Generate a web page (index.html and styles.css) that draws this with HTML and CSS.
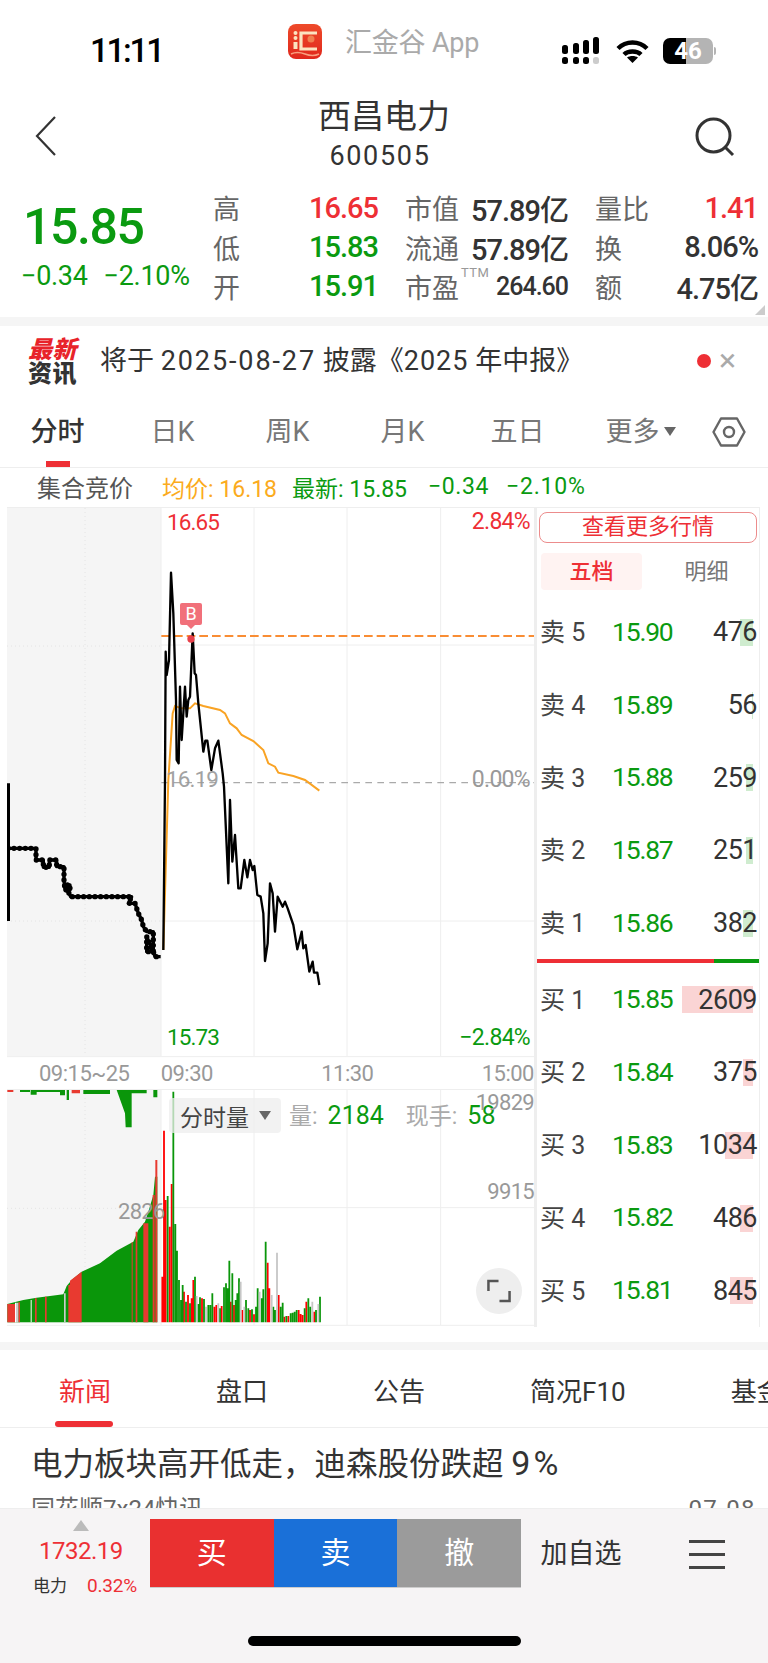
FILE: index.html
```
<!DOCTYPE html>
<html>
<head>
  <meta charset="UTF-8">
  <link rel="stylesheet" href="styles.css">
  <title>西昌电力</title>
</head>
<body>
<div class="page">

  <div class="status">
    <div class="status-time">11:11</div>
    <div class="status-app">
      <svg class="app-logo" viewBox="0 0 34 35">
        <defs><linearGradient id="logoRed" x1="0" y1="0" x2="0" y2="1"><stop offset="0" stop-color="#ee4a2a"/><stop offset="1" stop-color="#e0281c"/></linearGradient></defs>
        <rect width="34" height="35" rx="8" fill="url(#logoRed)"/>
        <circle cx="7.5" cy="9" r="2" fill="#fbe3c0"/>
        <circle cx="7.5" cy="14" r="2" fill="#fbe3c0"/>
        <path d="M7.5 18V25" stroke="#fbe3c0" stroke-width="4" fill="none"/>
        <path d="M29 9H13V25H29" stroke="#fbe3c0" stroke-width="3.2" fill="none"/>
        <circle cx="23" cy="15" r="3.5" fill="#f08050"/>
        <path d="M3 30Q9 27 17 30T31 30" stroke="#f8a080" stroke-width="1.4" fill="none"/>
      </svg>
      <span>汇金谷 App</span>
    </div>
    <div class="status-icons">
      <svg class="signal" viewBox="0 0 39 27">
        <rect x="0" y="8" width="6" height="9" rx="2.5"/>
        <rect x="11" y="6" width="6" height="11" rx="2.5"/>
        <rect x="21" y="3" width="6" height="14" rx="2.5"/>
        <rect x="31" y="0" width="6" height="17" rx="2.5"/>
        <rect x="0" y="20" width="6" height="7" rx="2.5"/>
        <rect x="11" y="20" width="6" height="7" rx="2.5"/>
        <rect x="21" y="20" width="6" height="7" rx="2.5"/>
        <rect x="31" y="20" width="6" height="7" rx="2.5" fill="#ccc"/>
      </svg>
      <svg class="wifi" viewBox="0 0 33 24">
        <path d="M2 9.5C10 1.5 23 1.5 31 9.5" stroke="#000" stroke-width="4.4" fill="none"/>
        <path d="M8 15.5C12 11.5 21 11.5 25 15.5" stroke="#000" stroke-width="4.4" fill="none"/>
        <path d="M16.5 24L11 18.5C14 16.5 19 16.5 22 18.5Z"/>
      </svg>
      <div class="battery">46</div>
      <div class="battery-cap"></div>
    </div>
  </div>

  <div class="header">
    <svg class="back" viewBox="0 0 22 40"><path d="M20 1L2 20L20 39" fill="none" stroke="#333" stroke-width="2.2"/></svg>
    <div class="title-box">
      <div class="title">西昌电力</div>
      <div class="code">600505</div>
    </div>
    <svg class="search" viewBox="0 0 40 40"><circle cx="18.5" cy="18.5" r="16.5" fill="none" stroke="#333" stroke-width="3"/><path d="M30 30L38 38" stroke="#333" stroke-width="3"/></svg>
  </div>

  <div class="quote">
    <div class="quote-main">
      <div class="price">15.85</div>
      <div class="change"><span>−0.34</span><span>−2.10%</span></div>
    </div>
    <div class="stats">
      <div class="stat"><span class="lbl">高</span><span class="val red">16.65</span></div>
      <div class="stat"><span class="lbl">市值</span><span class="val">57.89亿</span></div>
      <div class="stat"><span class="lbl">量比</span><span class="val red">1.41</span></div>
      <div class="stat"><span class="lbl">低</span><span class="val green">15.83</span></div>
      <div class="stat"><span class="lbl">流通</span><span class="val">57.89亿</span></div>
      <div class="stat"><span class="lbl">换</span><span class="val">8.06%</span></div>
      <div class="stat"><span class="lbl">开</span><span class="val green">15.91</span></div>
      <div class="stat"><span class="lbl">市盈<sup class="ttm">TTM</sup></span><span class="val small">264.60</span></div>
      <div class="stat"><span class="lbl">额</span><span class="val">4.75亿</span></div>
    </div>
    <div class="corner"></div>
  </div>

  <div class="band"></div>

  <div class="notice">
    <div class="notice-logo"><div class="notice-red">最新</div><div class="notice-dark">资讯</div></div>
    <div class="notice-text">将于 <span class="date-num">2025-08-27</span> 披露《<span class="year-num">2025</span> 年中报》</div>
    <div class="notice-dot"></div>
    <div class="notice-close">×</div>
  </div>

  <div class="tabs">
    <div class="tab active">分时</div>
    <div class="tab">日K</div>
    <div class="tab">周K</div>
    <div class="tab">月K</div>
    <div class="tab">五日</div>
    <div class="tab more">更多<i class="arrow"></i></div>
    <svg class="hex" viewBox="0 0 34 30"><path d="M9 1.5H25L32.5 15L25 28.5H9L1.5 15Z" fill="none" stroke="#666" stroke-width="2.4" stroke-linejoin="round"/><circle cx="17" cy="15" r="5" fill="none" stroke="#666" stroke-width="2.4"/></svg>
  </div>

  <div class="info">
    <span class="info-name">集合竞价</span>
    <span class="orange info-avg">均价: 16.18</span>
    <span class="green info-new">最新: 15.85</span>
    <span class="green info-chg">−0.34</span>
    <span class="green info-pct">−2.10%</span>
  </div>

  <div class="chart-row">
    <div class="chart-col">

      <div class="chart-main">
        <svg class="chart-svg" viewBox="21 21 1581 1653">
          <rect x="21" y="24" width="462" height="1644" fill="#f5f5f5"/>
          <g stroke="#eee" stroke-width="3" fill="none">
            <path d="M21 22.5H1602M483 24V1668M762 24V1668M1041 24V1668M1322 24V1668M483 435H1602M483 1263H1602M21 1670H1602"/>
          </g>
          <path d="M255 24V1668M21 438H483M21 1263H483" stroke="#e4e4e4" stroke-width="3" stroke-dasharray="3 9" fill="none"/>
          <path d="M484 848H1602" stroke="#aaa" stroke-width="4" stroke-dasharray="20 16" fill="none"/>
          <path d="M484 408H1602" stroke="#f98d34" stroke-width="5.5" stroke-dasharray="26 12" fill="none"/>
          <path class="line-pre" d="M25 850V1263M25 1045H108V1080H130V1102H148V1080H170V1100H192V1140L195 1170H210V1155H195L212 1190H395L385 1210H405L415 1240L425 1260L430 1280L440 1295H460V1355H440V1310L460 1355L465 1370H482"/>
          <path class="line-beads" d="M25 1045H108V1080H130V1102H148V1080H170V1100H192V1140L195 1170H210V1155H195L212 1190H395L385 1210H405L415 1240L425 1260L430 1280L440 1295H460V1355H440V1310L460 1355L465 1370H482"/>
          <path class="line-avg" d="M490 1350L505 840L518 640L525 618L545 625L570 625L585 610L610 618L660 630L675 640L690 670L710 685L725 705L760 723L790 750L805 790L825 800L835 818L880 828L915 840L958 872"/>
          <path class="line-price" d="M490 1350L495 840L497 455L500 525L507 480L513 218L520 340L528 600L530 780L536 790L540 560L545 720L555 560L560 650L565 600L570 590L578 400L584 520L588 525L595 610L610 755L616 722L622 722L634 810L645 745L655 722L668 820L672 860L685 1150L690 900L697 1085L705 1005L715 1165L722 1165L733 1080L742 1132L750 1080L758 1110L763 1098L772 1185L782 1190L790 1240L795 1383L803 1330L810 1150L818 1180L825 1295L833 1190L848 1220L855 1205L863 1225L880 1275L892 1348L905 1295L910 1345L917 1335L928 1415L938 1385L942 1418L952 1418L958 1455"/>
          <circle cx="573" cy="417" r="11" fill="#e8404a"/>
        </svg>
        <div class="marker">B</div>
        <span class="tag red t-high">16.65</span>
        <span class="tag red t-highp">2.84%</span>
        <span class="tag gray t-mid">16.19</span>
        <span class="tag gray t-midp">0.00%</span>
        <span class="tag green t-low">15.73</span>
        <span class="tag green t-lowp">−2.84%</span>
      </div>

      <div class="time-axis">
        <span class="time-a">09:15~25</span>
        <span class="time-b">09:30</span>
        <span class="time-c">11:30</span>
        <span class="time-d">15:00</span>
      </div>

      <div class="vol">
        <svg class="vol-svg" viewBox="21 27 1581 714">
          <rect x="21" y="30" width="462" height="700" fill="#f5f5f5"/>
          <path d="M21 28.5H1602M483 30V735M762 30V735M1041 30V735M1322 30V735M483 383H1602M21 736H1602" stroke="#eee" stroke-width="3" fill="none"/>
          <path d="M255 30V727M21 385H483" stroke="#e4e4e4" stroke-width="3" stroke-dasharray="3 9" fill="none"/>
          <path fill="#0a960a" d="M22 672L70 660L110 653L190 643L200 618L215 600L245 575L300 550L350 512L400 485L415 450L435 425L445 395L460 345L465 290L472 290V727H22Z"/>
          <path fill="#0a960a" d="M60 30H90V36H60ZM92 30H110V44H92ZM110 30H180V36H110ZM180 30H195V46H180ZM200 30H207V60H200ZM250 30H330V42H250ZM330 30H350L375 100L377 142H395V30ZM395 30H440V40H395ZM445 30H472V52H460V30Z"/>
          <path fill="#e83a30" d="M22 30H40V36H22ZM215 30H240V40H215Z"/>
          <path fill="#e83a30" d="M22 672H45V727H22ZM55 667H60V727H55ZM105 655H110V727H105ZM135 650H140V727H135ZM205 615H210V727H205ZM210 602L245 575V727H210ZM395 487H398V727H395ZM407 455H412V727H407ZM430 430H445V727H430ZM458 345H464V727H458ZM466 240H472V727H466Z"/>
          <path fill="#fff" d="M45 668H48V727H45ZM92 660H95V727H92Z"/>
          <path fill="#ccc" d="M48 668H55V727H48ZM192 640H197V727H192Z"/>
          <g stroke-width="5.4" fill="none">
            <path stroke="#f00" d="M487 727V590M492 727V152M497 727V360M509 727V440M515 727V312M552 727V635M564 727V645M575 727V655M580 727V600M606 727V655M643 727V680M649 727V675M665 727V678M692 727V665M702 727V675M727 727V690M750 727V690M762 727V703M803 727V548M808 727V625M836 727V645M853 727V710M865 727V708M896 727V690M902 727V702M908 727V705M919 727V665M943 727V695"/>
            <path stroke="#0a960a" d="M503 727V348M520 727V35M526 727V432M531 727V512M537 727V600M543 727V660M548 727V615M558 727V665M570 727V670M585 727V590M595 727V672M600 727V652M612 727V657M625 727V675M631 727V675M637 727V640M660 727V685M672 727V622M678 727V610M683 727V625M688 727V542M697 727V580M707 727V660M712 727V640M717 727V595M738 727V660M745 727V685M756 727V688M768 727V680M773 727V625M785 727V655M790 727V628M797 727V485M820 727V680M825 727V690M842 727V680M848 727V668M859 727V708M872 727V700M878 727V698M884 727V695M890 727V690M914 727V685M925 727V655M931 727V680M948 727V690M960 727V650"/>
            <path stroke="#c6c6c6" d="M590 727V648M618 727V680M655 727V670M722 727V605M733 727V680M779 727V635M815 727V645M831 727V518M937 727V665M955 727V672"/>
          </g>
        </svg>
        <div class="vol-pill"><span>分时量</span><i class="arrow"></i></div>
        <div class="vol-info"><span class="vol-lbl">量:</span><span class="green vol-num">2184</span><span class="vol-lbl vol-now">现手:</span><span class="green vol-num">58</span></div>
        <span class="tag gray v-top">19829</span>
        <span class="tag gray v-mid">9915</span>
        <span class="tag gray v-pre">2826</span>
        <div class="expand">
          <svg viewBox="0 0 25 24"><path d="M1.5 12V1.5H12M23.5 12V22.5H13" fill="none" stroke="#555" stroke-width="2.6"/></svg>
        </div>
      </div>
    </div>

    <div class="depth">
      <div class="more-btn">查看更多行情</div>
      <div class="depth-tabs">
        <div class="depth-tab on">五档</div>
        <div class="depth-tab">明细</div>
      </div>
      <div class="rows">
        <div class="row"><span class="row-lbl">卖 5</span><span class="row-price">15.90</span><span class="row-vol">476</span><i class="bar sell" style="width:13px"></i></div>
        <div class="row"><span class="row-lbl">卖 4</span><span class="row-price">15.89</span><span class="row-vol">56</span><i class="bar sell" style="width:1px"></i></div>
        <div class="row"><span class="row-lbl">卖 3</span><span class="row-price">15.88</span><span class="row-vol">259</span><i class="bar sell" style="width:7px"></i></div>
        <div class="row"><span class="row-lbl">卖 2</span><span class="row-price">15.87</span><span class="row-vol">251</span><i class="bar sell" style="width:7px"></i></div>
        <div class="row"><span class="row-lbl">卖 1</span><span class="row-price">15.86</span><span class="row-vol">382</span><i class="bar sell" style="width:10px"></i></div>
      </div>
      <div class="split"><div class="split-red"></div><div class="split-green"></div></div>
      <div class="rows">
        <div class="row"><span class="row-lbl">买 1</span><span class="row-price">15.85</span><span class="row-vol">2609</span><i class="bar buy" style="width:71px"></i></div>
        <div class="row"><span class="row-lbl">买 2</span><span class="row-price">15.84</span><span class="row-vol">375</span><i class="bar buy" style="width:10px"></i></div>
        <div class="row"><span class="row-lbl">买 3</span><span class="row-price">15.83</span><span class="row-vol">1034</span><i class="bar buy" style="width:28px"></i></div>
        <div class="row"><span class="row-lbl">买 4</span><span class="row-price">15.82</span><span class="row-vol">486</span><i class="bar buy" style="width:13px"></i></div>
        <div class="row"><span class="row-lbl">买 5</span><span class="row-price">15.81</span><span class="row-vol">845</span><i class="bar buy" style="width:23px"></i></div>
      </div>
    </div>
  </div>

  <div class="band band-news"></div>

  <div class="news-tabs">
    <div class="news-tab on">新闻</div>
    <div class="news-tab">盘口</div>
    <div class="news-tab">公告</div>
    <div class="news-tab">简况F10</div>
    <div class="news-tab">基金</div>
  </div>

  <div class="news">
    <div class="news-title">电力板块高开低走，迪森股份跌超 <span class="news-pct">9%</span></div>
    <div class="news-meta"><span>同花顺7x24快讯</span><span class="news-date">07-08</span></div>
  </div>

  <div class="bottom">
    <div class="index">
      <i class="index-up"></i>
      <div class="index-val">1732.19</div>
      <div class="index-sub"><span>电力</span><span class="red">0.32%</span></div>
    </div>
    <div class="trade">
      <div class="trade-btn t-buy">买</div>
      <div class="trade-btn t-sell">卖</div>
      <div class="trade-btn t-undo">撤</div>
    </div>
    <div class="add">加自选</div>
    <div class="menu"><i></i><i></i><i></i></div>
    <div class="home"></div>
  </div>

</div>
</body>
</html>
```

FILE: styles.css
```
* {
  box-sizing: border-box;
}
html, body {
  margin: 0;
  padding: 0;
  background: #fff;
}
body {
  font-family: Roboto, "Noto Sans CJK SC", sans-serif;
  color: #333;
}
.page {
  width: 768px;
  height: 1663px;
  overflow: hidden;
}
i {
  display: block;
}
.red { color: #ee2f35; }
.green { color: #0a9a10; }
.orange { color: #fbab1d; }
.gray { color: #999; }

/* status bar */
.status {
  height: 88px;
  display: flex;
  align-items: flex-start;
}
.status-time {
  margin: 33px 0 0 90px;
  width: 198px;
  font-size: 33px;
  line-height: 36px;
  font-weight: 500;
  letter-spacing: -2.2px;
  color: #000;
}
.status-app {
  display: flex;
  align-items: center;
  margin-top: 22px;
  width: 274px;
  font-size: 27px;
  line-height: 35px;
  color: #aaa;
}
.status-app span {
  margin-top: 4px;
  letter-spacing: -0.2px;
}
.app-logo {
  width: 34px;
  height: 35px;
  margin-right: 23px;
}
.status-icons {
  display: flex;
  align-items: center;
  margin-top: 37px;
}
.signal {
  width: 39px;
  height: 27px;
}
.wifi {
  width: 33px;
  height: 24px;
  margin-left: 15px;
}
.battery {
  width: 50px;
  height: 26px;
  margin-left: 14px;
  border-radius: 7px;
  background: linear-gradient(to right, #000 46%, #b4b4b4 46%);
  color: #fff;
  font-size: 24px;
  line-height: 26px;
  font-weight: 700;
  text-align: center;
}
.battery-cap {
  width: 2px;
  height: 8px;
  margin-left: 1px;
  border-radius: 0 2px 2px 0;
  background: #b4b4b4;
}

/* header */
.header {
  height: 102px;
  display: flex;
  position: relative;
}
.back {
  width: 22px;
  height: 40px;
  margin: 28px 0 0 35px;
}
.title-box {
  position: absolute;
  left: 0;
  right: 0;
  top: 9px;
  text-align: center;
}
.title {
  font-size: 33px;
  line-height: 40px;
}
.code {
  font-size: 27px;
  line-height: 34px;
  margin-top: 2px;
  margin-left: -8px;
  letter-spacing: 1.7px;
}
.search {
  width: 40px;
  height: 40px;
  margin: 29px 0 0 638px;
}

/* quote */
.quote {
  height: 127px;
  display: flex;
  position: relative;
}
.quote-main {
  width: 213px;
  padding-left: 21px;
}
.price {
  font-size: 50px;
  line-height: 56px;
  font-weight: 500;
  letter-spacing: -1.4px;
  margin: 9px 0 0 2px;
  color: #0a9a10;
}
.change {
  display: flex;
  gap: 16px;
  font-size: 27px;
  line-height: 30px;
  margin-top: 6px;
  letter-spacing: -0.3px;
  color: #0a9a10;
}
.stats {
  display: grid;
  grid-template-columns: 165px 163px 163px;
  column-gap: 27px;
  grid-auto-rows: 39.4px;
  margin-top: -2px;
}
.stat {
  display: flex;
  justify-content: space-between;
  align-items: center;
}
.lbl {
  font-size: 27px;
  color: #666;
  position: relative;
}
.val {
  font-size: 29px;
  font-weight: 500;
  letter-spacing: -1px;
}
.val.small {
  font-size: 25px;
}
.ttm {
  position: absolute;
  left: 56px;
  top: -1px;
  font-size: 13px;
  line-height: 14px;
  color: #999;
  letter-spacing: 0.5px;
}
.corner {
  position: absolute;
  right: 3px;
  bottom: 2px;
  width: 0;
  height: 0;
  border-left: 10px solid transparent;
  border-bottom: 10px solid #ccc;
}
.band {
  height: 9px;
  background: #f5f5f5;
}

/* notice */
.notice {
  height: 70px;
  display: flex;
  align-items: flex-start;
}
.notice-logo {
  width: 72px;
  margin: 12px 0 0 28px;
  font-size: 24px;
  line-height: 24px;
  font-weight: 900;
}
.notice-red {
  color: #e8232a;
  font-style: italic;
  letter-spacing: 0.6px;
}
.notice-dark {
  color: #333;
  letter-spacing: 0.6px;
}
.notice-text {
  width: 597px;
  font-size: 27px;
  line-height: 70px;
  white-space: nowrap;
  color: #333;
}
.date-num {
  letter-spacing: 1.9px;
}
.year-num {
  letter-spacing: 1px;
}
.notice-dot {
  width: 14px;
  height: 14px;
  margin-top: 28px;
  border-radius: 50%;
  background: #ee2f35;
}
.notice-close {
  margin-left: 8px;
  font-size: 32px;
  line-height: 68px;
  color: #aaa;
}

/* tabs */
.tabs {
  height: 72px;
  display: flex;
  border-bottom: 1px solid #eee;
  color: #777;
}
.tab {
  width: 115px;
  font-size: 27px;
  line-height: 72px;
  text-align: center;
  position: relative;
}
.tab.active {
  color: #333;
  font-weight: 500;
}
.tab.active::after {
  content: "";
  position: absolute;
  left: 46px;
  bottom: 0;
  width: 24px;
  height: 6px;
  background: #ee2f35;
}
.tab.more {
  width: 131px;
  display: flex;
  justify-content: center;
  align-items: center;
  gap: 4px;
}
.arrow {
  width: 0;
  height: 0;
  border-left: 6px solid transparent;
  border-right: 6px solid transparent;
  border-top: 9px solid #666;
}
.hex {
  width: 34px;
  height: 30px;
  margin: 21px 0 0 6px;
}

/* info */
.info {
  height: 39px;
  display: flex;
  align-items: center;
  padding: 0 0 2px 37px;
  font-size: 23px;
}
.info-name {
  width: 125px;
  color: #555;
  font-size: 24px;
}
.info-avg {
  width: 130px;
}
.info-new {
  width: 136px;
}
.info-chg {
  width: 78px;
  letter-spacing: 0.6px;
}
.info-pct {
  letter-spacing: 0.8px;
}

/* chart */
.chart-row {
  display: flex;
  height: 820px;
  padding-left: 7px;
}
.chart-col {
  width: 527px;
}
.chart-main {
  position: relative;
  height: 551px;
}
.chart-svg {
  display: block;
  width: 527px;
  height: 551px;
}
.vol-svg {
  display: block;
  width: 527px;
  height: 238px;
}
.line-pre {
  fill: none;
  stroke: #000;
  stroke-width: 10;
  stroke-linejoin: round;
}
.line-beads {
  fill: none;
  stroke: #000;
  stroke-width: 16;
  stroke-linecap: round;
  stroke-dasharray: 0 17;
}
.line-price {
  fill: none;
  stroke: #000;
  stroke-width: 7;
  stroke-linejoin: round;
}
.line-avg {
  fill: none;
  stroke: #f9a324;
  stroke-width: 6;
}
.tag {
  position: absolute;
  font-size: 23px;
  line-height: 23px;
  letter-spacing: -0.7px;
}
.t-high { left: 160px; top: 4px; font-size: 22.5px; letter-spacing: -0.9px; }
.t-highp { right: 4px; top: 3px; }
.t-mid { left: 159px; top: 261px; font-size: 22.5px; letter-spacing: -0.9px; opacity: .9; }
.t-midp { right: 4px; top: 261px; }
.t-low { left: 160px; top: 519px; font-size: 22.5px; letter-spacing: -0.9px; }
.t-lowp { right: 4px; top: 519px; }
.marker {
  position: absolute;
  left: 173px;
  top: 96px;
  width: 22px;
  height: 22px;
  border-radius: 2px;
  background: #f1707a;
  color: #fff;
  font-size: 18px;
  line-height: 22px;
  text-align: center;
}
.marker::after {
  content: "";
  position: absolute;
  left: 7px;
  top: 22px;
  border-left: 4px solid transparent;
  border-right: 4px solid transparent;
  border-top: 4px solid #f1707a;
}
.time-axis {
  height: 31px;
  display: flex;
  align-items: center;
  font-size: 22px;
  color: #999;
  letter-spacing: -0.5px;
}
.time-a {
  margin-left: 32px;
  width: 122px;
}
.time-b {
  width: 161px;
}
.time-c {
  width: 161px;
}
.vol {
  position: relative;
  height: 238px;
}
.vol-pill {
  position: absolute;
  left: 162px;
  top: 9px;
  width: 112px;
  height: 35px;
  padding-left: 11px;
  display: flex;
  align-items: center;
  gap: 10px;
  border-radius: 4px;
  background: rgba(238, 238, 238, .75);
  font-size: 23px;
  color: #444;
}
.vol-info {
  position: absolute;
  left: 282px;
  top: 9px;
  font-size: 23px;
  line-height: 35px;
  white-space: nowrap;
}
.vol-num {
  font-size: 25px;
  margin-left: 10px;
}
.vol-lbl {
  color: #aaa;
}
.vol-now {
  margin-left: 22px;
}
.v-top { right: 0; top: 2px; font-size: 22px; }
.v-mid { right: 0; top: 91px; font-size: 22px; }
.v-pre { left: 111px; top: 111px; font-size: 22px; }
.expand {
  position: absolute;
  left: 469px;
  top: 179px;
  width: 46px;
  height: 46px;
  padding: 11px;
  border-radius: 50%;
  background: #eee;
}
.expand svg {
  display: block;
  width: 24px;
  height: 24px;
}

/* five levels */
.depth {
  width: 226px;
  height: 820px;
  border-left: 3px solid #eee;
  border-right: 1px solid #eee;
  border-top: 1px solid #eee;
}
.more-btn {
  width: 218px;
  height: 31px;
  margin: 4px 0 0 2px;
  border: 1px solid #ec8c8c;
  border-radius: 8px;
  color: #ee2f35;
  font-size: 22px;
  line-height: 28px;
  text-align: center;
}
.depth-tabs {
  display: flex;
  margin: 10px 0 6px 4px;
}
.depth-tab {
  flex: none;
  width: 101px;
  height: 37px;
  margin-right: 14px;
  font-size: 22px;
  line-height: 37px;
  text-align: center;
  color: #777;
  border-radius: 4px;
}
.depth-tab.on {
  background: #fff3f2;
  color: #ee2f35;
  font-weight: 500;
}
.row {
  position: relative;
  height: 72.7px;
  display: flex;
  align-items: center;
  padding: 0 2px 0 3px;
}
.row-lbl {
  width: 72px;
  font-size: 25px;
  line-height: 32px;
  margin-top: 2px;
  color: #444;
  position: relative;
}
.row-price {
  font-size: 26.5px;
  color: #0a9a10;
  letter-spacing: -1.2px;
  margin-top: -2px;
  position: relative;
}
.row-vol {
  flex: 1;
  text-align: right;
  font-size: 27px;
  letter-spacing: -0.5px;
  position: relative;
  z-index: 1;
}
.bar {
  position: absolute;
  right: 6px;
  top: 23px;
  height: 27px;
}
.bar.sell { background: #cfeccf; }
.bar.buy { background: #fad4d4; }
.split {
  display: flex;
  height: 4px;
}
.split-red {
  width: 177px;
  background: #ee2f35;
}
.split-green {
  flex: 1;
  background: #0a9a10;
}

/* news */
.band-news {
  height: 8px;
  margin-top: 15px;
}
.news-tabs {
  height: 78px;
  display: flex;
  gap: 105px;
  padding-left: 59px;
  border-bottom: 1px solid #eee;
  font-size: 26px;
  line-height: 84px;
  white-space: nowrap;
}
.news-tab {
  position: relative;
  flex: none;
}
.news-tab.on {
  color: #ee2f35;
}
.news-tab.on::after {
  content: "";
  position: absolute;
  left: -4px;
  right: -2px;
  bottom: 0;
  height: 6px;
  border-radius: 3px;
  background: #ee2f35;
}
.news {
  height: 80px;
  overflow: hidden;
  padding: 15px 12px 0 31px;
}
.news-title {
  font-size: 31.5px;
  line-height: 40px;
  color: #333;
}
.news-pct {
  font-size: 34px;
  letter-spacing: 3px;
}
.news-meta {
  display: flex;
  justify-content: space-between;
  margin-top: 9px;
  font-size: 24px;
  line-height: 30px;
  color: #666;
}
.news-date {
  letter-spacing: 1.4px;
}

/* bottom bar */
.bottom {
  position: relative;
  height: 155px;
  display: flex;
  align-items: flex-start;
  background: #f6f4f5;
  border-top: 1px solid #eee;
}
.index {
  width: 150px;
  padding-left: 33px;
}
.index-up {
  width: 0;
  height: 0;
  margin: 11px 0 0 40px;
  border-left: 8px solid transparent;
  border-right: 8px solid transparent;
  border-bottom: 11px solid #bbb;
}
.index-val {
  margin: 6px 0 0 6px;
  font-size: 24px;
  line-height: 28px;
  color: #ee2f35;
  letter-spacing: -0.5px;
}
.index-sub {
  display: flex;
  gap: 20px;
  font-size: 17px;
  line-height: 24px;
  margin-top: 9px;
}
.index-sub .red {
  font-size: 19px;
  letter-spacing: -0.2px;
}
.trade {
  display: flex;
  margin-top: 10px;
  border-bottom: 1px solid #ccc;
}
.trade-btn {
  width: 123.7px;
  height: 68px;
  color: #fff;
  font-size: 30px;
  line-height: 68px;
  text-align: center;
}
.t-buy { background: #e93030; }
.t-sell { background: #1a70d8; }
.t-undo { background: #9b9b9b; }
.add {
  width: 124px;
  margin-top: 10px;
  font-size: 27px;
  line-height: 70px;
  text-align: center;
  margin-left: -2px;
}
.menu {
  margin: 31px 0 0 46px;
  width: 36px;
  display: flex;
  flex-direction: column;
  gap: 10.5px;
}
.menu i {
  height: 2.5px;
  background: #444;
}
.home {
  position: absolute;
  left: 248px;
  top: 127px;
  width: 273px;
  height: 10px;
  border-radius: 5px;
  background: #000;
}
```
